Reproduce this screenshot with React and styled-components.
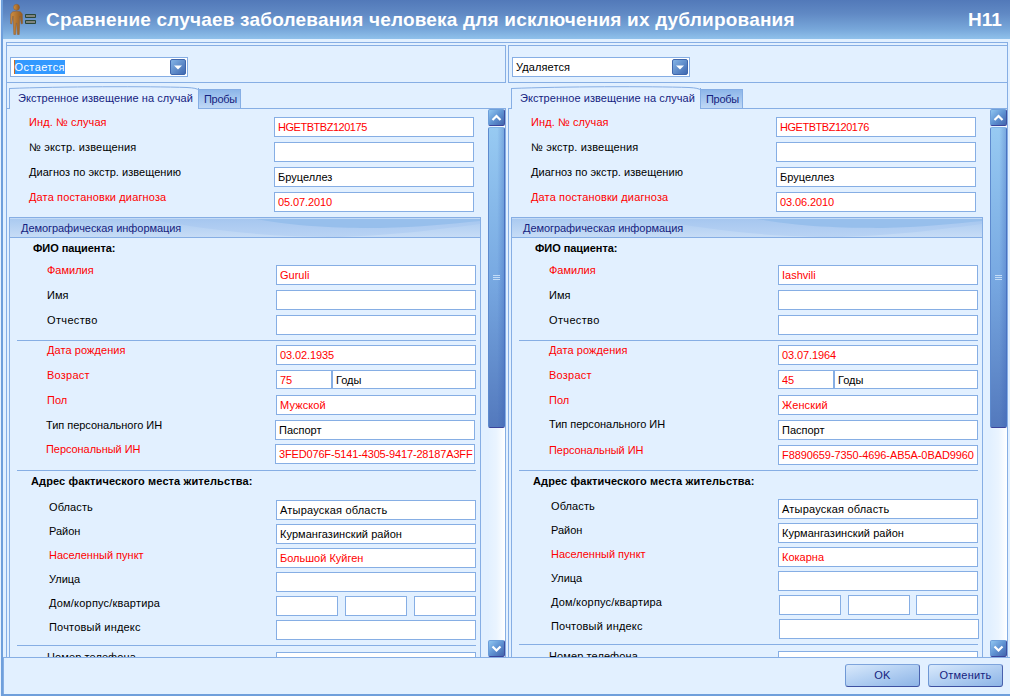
import React from "react";
import styled, { createGlobalStyle, css } from "styled-components";

const line = "#86aee4";
const face = "#e2f0ff";
const navy = "#15237f";

const Global = createGlobalStyle`
  * { box-sizing: border-box; }
  html, body { margin: 0; height: 696px; overflow: hidden; }
  body { font: 11px/12px "Liberation Sans", Arial, sans-serif; color: #000; background: #e8f2fe; }
`;

const Window = styled.div`
  width: 1009px; height: 696px; margin-left: 1px;
  display: flex; flex-direction: column;
  background: ${face};
  border-left: 2px solid #6f9fdb;
  border-bottom: 2px solid #6f9fdb;
  overflow: hidden;
`;
const Header = styled.header`
  flex: none; height: 39px; padding: 0 8px 0 7px;
  display: flex; align-items: center;
  background: linear-gradient(#5279b9, #6089c4 35%, #78a7da 75%, #90c1eb);
  color: #fff; font-weight: bold; font-size: 19px; line-height: 39px; white-space: nowrap;
`;
const Title = styled.h1`
  margin: 0 auto 0 5px; font: inherit; letter-spacing: 0.19px;
`;
const Code = styled.span`letter-spacing: 0.1px;`;

const Frame = styled.main`
  flex: none; height: 616px; width: 1002px; margin: 3px 0 0 3px;
  border: 1px solid ${line};
  display: flex; gap: 2px; padding-top: 2px;
`;
const Column = styled.section`
  width: 500px; flex: none; display: flex; flex-direction: column;
  margin-left: ${(p) => (p.$first ? -1 : 0)}px;
`;
const ComboBar = styled.div`
  flex: none; height: 38px; border: 1px solid ${line}; padding: 11px 0 0 3px;
`;
const Combo = styled.div`
  width: 178px; height: 20px; border: 1px solid ${line}; background: #fff;
  display: flex; justify-content: space-between; align-items: center; padding: 0 1px 0 3px;
`;
const ComboText = styled.span`
  line-height: 14px; letter-spacing: 0.1px;
  ${(p) => p.$selected && css`background: #3399ff; color: #fff; border-left: 1px solid #d06a1c; letter-spacing: 0.4px; text-indent: -0.5px;`}
`;
const ComboButton = styled.span`
  width: 16px; height: 16px; border-radius: 2px; border: 1px solid #3f66ac;
  background: linear-gradient(135deg, #84b4e6, #3f68b0);
  display: flex; align-items: center; justify-content: center;
`;
const Tabs = styled.nav`
  flex: none; height: 26px; display: flex; align-items: flex-end; color: ${navy};
`;
const TabGap = styled.div`
  height: 1px; background: ${line};
  width: ${(p) => (p.$grow ? "auto" : "3px")}; flex: ${(p) => (p.$grow ? 1 : "none")};
`;
const Tab = styled.div`
  white-space: nowrap; border: 1px solid ${line};
  ${(p) => p.$active
    ? css`width: 190px; height: 21px; border-bottom: 0; border-top: 0; padding: 4px 0 0 8px; position: relative; letter-spacing: 0.06px;`
    : css`width: 43px; height: 20px; margin-left: -1px; padding: 3px 0 0 5px; letter-spacing: -0.3px;
        background: linear-gradient(#8db6e9, #c0d9f6);`}
`;
const TabCurve = styled.svg`
  position: absolute; left: -1px; top: -2px; width: 190px; height: 4px; overflow: visible;
`;
const Page = styled.div`
  flex: 1; min-height: 0; display: flex; overflow: hidden;
  border: solid ${line}; border-width: 0 1px;
`;
const Form = styled.div`flex: 1; min-width: 0; overflow: hidden; padding-top: 7px;`;

const Row = styled.div`
  display: flex; align-items: flex-start; height: ${(p) => p.$h}px; white-space: nowrap;
`;
const Label = styled.label`
  flex: none; width: ${(p) => p.$w}px; padding-left: ${(p) => p.$x}px;
  margin-top: ${(p) => p.$dy}px; color: ${(p) => (p.$red ? "#f00" : "#000")};
  letter-spacing: ${(p) => p.$ls || 0}px;
`;
const Field = styled.div`
  flex: none; width: ${(p) => p.$w || 200}px; height: ${(p) => p.$h || 20}px;
  margin: ${(p) => p.$dy}px 0 0 ${(p) => p.$ml || 0}px; padding: 3px 0 0 3px;
  border: 1px solid ${line}; background: #fff; overflow: hidden;
  color: ${(p) => (p.$red ? "#f00" : "#000")};
  letter-spacing: ${(p) => p.$ls || 0}px;
`;
const Group = styled.div`
  margin: 1px 0 0 2px; width: 472px; height: 460px;
  border: 1px solid ${line}; border-bottom: 0;
`;
const GroupHeader = styled.div`
  height: 20px; border-bottom: 1px solid ${line}; position: relative;
  background: #c3dbf6; color: ${navy}; padding: 4px 0 0 11px;
`;
const Wave = styled.svg`position: absolute; left: 0; top: 0; width: 470px; height: 19px;`;
const GroupTitle = styled.span`position: relative; letter-spacing: -0.06px;`;
const Heading = styled.div`
  font-weight: bold; height: ${(p) => p.$h}px; padding: ${(p) => p.$top}px 0 0 ${(p) => p.$x}px;
  letter-spacing: ${(p) => p.$ls || 0}px;
`;
const Rule = styled.div`
  height: 1px; background: ${line}; margin: 0 4px ${(p) => p.$below}px 7px;
`;

const Scroll = styled.div`
  flex: none; width: 17px; display: flex; flex-direction: column;
  background: linear-gradient(90deg, ${face}, #eaf4ff 50%, #fff);
`;
const ScrollButton = styled.div`
  height: 17px; flex: none; border-radius: 2px; border: 1px solid;
  border-color: #6fa0da #3f4f9f #3b449b #6c9dd9;
  background: linear-gradient(135deg, #8fc5f0, #5f92d2 50%, #4264ac);
  display: flex; align-items: center; justify-content: center;
`;
const Thumb = styled.div`
  height: 301px; flex: none; margin: 1px 0 auto; border-radius: 2px;
  border: 1px solid; border-color: #7fb3e6 #4a72c0 #3b449b #5d8ace;
  background: linear-gradient(90deg, transparent 55%, rgba(50,90,180,.3)), linear-gradient(#97caf2, #78a9e2 50%, #5379bd);
  display: flex; align-items: center; justify-content: center;
`;
const Footer = styled.footer`
  flex: 1; display: flex; justify-content: flex-end; gap: 8px; padding: 6px 7px 0 0; margin-top: -1px;
  border-top: 1px solid ${line}; border-left: 1px solid ${line};
`;
const Button = styled.button`
  width: 75px; height: 23px; padding: 0 0 1px; border-radius: 3px; border: 1px solid;
  border-color: #7ea4dc #4a62ae #3d51a2 #6f99d6;
  background: linear-gradient(165deg, #d9e9fb, #b5d1f3 45%, #8db4e6);
  font: inherit; color: ${navy}; letter-spacing: 0.2px;
`;

const Person = () => (
  <svg width="31" height="34" viewBox="0 0 31 34">
    <defs>
      <linearGradient id="skin" x1="0" x2="1">
        <stop offset="0" stopColor="#d08f42" /><stop offset="1" stopColor="#92591f" />
      </linearGradient>
    </defs>
    <g fill="url(#skin)" stroke="#8a5a30" strokeWidth=".5">
      <circle cx="6.500" cy="4.300" r="3" />
      <path d="M2.500 8.800Q6.500 7.600 10.500 8.800L12.300 11L12.600 20.500L11.300 21L10 13L9.700 18L9.200 31.500H7.400L6.700 20H6.300L5.600 31.500H3.800L3.300 18L3 13L1.700 21L.4 20.500L.7 11z" />
    </g>
    <path d="M15.500 11.500h10v3h-10zM15.500 17.500h10v3h-10z" fill="#80847e" stroke="#2b4637" />
  </svg>
);
const Chevron = ({ down }) => (
  <svg width="11" height="8" viewBox="0 0 11 8">
    <path d={down ? "M1.500 1.500L5.500 5.500L9.500 1.500" : "M1.500 6L5.500 2L9.500 6"} fill="none" stroke="#fff" strokeWidth="2.200" />
  </svg>
);

function Entry({ label, value = "", red, x = 38, w = 267, h = 25, ly = 0, fy = 1, ls, vls, fh, children }) {
  return (
    <Row $h={h}>
      <Label $x={x} $w={w} $dy={ly} $red={red} $ls={ls}>{label}</Label>
      {children || <Field $dy={fy} $red={red} $ls={vls} $h={fh}>{value}</Field>}
    </Row>
  );
}

function CaseColumn({ first, d }) {
  return (
    <Column $first={first}>
      <ComboBar>
        <Combo>
          <ComboText $selected={first}>{d.action}</ComboText>
          <ComboButton>
            <svg width="8" height="5"><path d="M0 0.500h8L4 4.500z" fill="#fff" /></svg>
          </ComboButton>
        </Combo>
      </ComboBar>
      <Tabs>
        <TabGap />
        <Tab $active>
          <TabCurve viewBox="0 0 190 4">
            <path d="M0.500 4V2.500C50 .5 140 .2 178 1.500Q188 2 189.500 4" fill="none" stroke={line} />
          </TabCurve>
          Экстренное извещение на случай
        </Tab>
        <Tab>Пробы</Tab>
        <TabGap $grow />
      </Tabs>
      <Page>
        <Form>
          <Entry label="Инд. № случая" value={d.id} red x={22} ls={0.08} vls={-0.47} />
          <Entry label="№ экстр. извещения" x={22} ls={0.17} />
          <Entry label="Диагноз по экстр. извещению" value="Бруцеллез" x={22} ls={0.04} />
          <Entry label="Дата постановки диагноза" value={d.diagDate} red x={22} ls={0.14} vls={-0.1} />
          <Group>
            <GroupHeader>
              <Wave viewBox="0 0 470 19" preserveAspectRatio="none">
                <defs>
                  <linearGradient id="base" x1="0" x2="0" y1="0" y2="1">
                    <stop offset="0" stopColor="#a9c9f0" /><stop offset="1" stopColor="#c6dcf6" />
                  </linearGradient>
                  <linearGradient id="band" x1="0" x2="0" y1="0" y2="1">
                    <stop offset="0" stopColor="#a5c6ef" /><stop offset="1" stopColor="#b9d3f4" />
                  </linearGradient>
                </defs>
                <path d="M0 0H470V19H0z" fill="url(#base)" />
                <path d="M130 0C200 12 250 19 330 19C390 17 430 11 470 6V0z" fill="url(#band)" />
                <path d="M240 0C290 10 340 10 370 10C410 9 440 6 470 3V0z" fill="#97bfec" />
                <path d="M0 .5H470" stroke="#c3daf6" />
              </Wave>
              <GroupTitle>Демографическая информация</GroupTitle>
            </GroupHeader>
            <Heading $h={26} $top={4} $x={23} $ls={-0.05}>ФИО пациента:</Heading>
            <Entry label="Фамилия" value={d.surname} red x={37} w={266} />
            <Entry label="Имя" x={37} w={266} />
            <Entry label="Отчество" x={37} w={266} h={26} ls={0.35} />
            <Rule $below={3} />
            <Entry label="Дата рождения" value={d.birth} red x={37} w={266} ls={0.08} vls={-0.1} />
            <Entry label="Возраст" red x={37} w={266} ls={0.25}>
              <Field $dy={1} $h={19} $w={56} $red>{d.age}</Field>
              <Field $dy={1} $h={19} $w={144}>Годы</Field>
            </Entry>
            <Entry label="Пол" value={d.sex} red x={37} w={266} vls={0.12} />
            <Entry
              label="Тип персонального ИН" value="Паспорт" x={first ? 36 : 37} w={first ? 265 : 266}
              ly={first ? 0 : -1} h={first ? 24 : 25} ls={-0.03}
            />
            <Entry
              label="Персональный ИН" value={d.pin} red x={first ? 36 : 37} w={first ? 265 : 266}
              h={first ? 27 : 26} ls={-0.06} vls={first ? -0.16 : -0.08}
            />
            <Rule $below={4} />
            <Heading $h={first ? 25 : 24} $top={0} $x={21} $ls={0.11}>Адрес фактического места жительства:</Heading>
            <Entry label="Область" value="Атырауская область" x={39} w={266} h={24} ly={1} fy={0} ls={0.1} vls={0.2} />
            <Entry label="Район" value="Курмангазинский район" x={39} w={266} h={24} ly={1} fy={0} vls={0.05} />
            <Entry label="Населенный пункт" value={d.town} red x={39} w={266} h={24} ly={1} fy={0} />
            <Entry label="Улица" x={39} w={266} h={24} ly={1} fy={0} />
            <Entry label="Дом/корпус/квартира" x={39} w={first ? 266 : 267} h={24} ly={1} ls={0.2}>
              <Field $w={62} $dy={0} />
              <Field $w={62} $dy={0} $ml={7} />
              <Field $w={62} $dy={0} $ml={first ? 7 : 6} />
            </Entry>
            <Entry label="Почтовый индекс" x={39} w={first ? 266 : 267} h={25} ly={1} fy={0} ls={0.2} />
            <Rule $below={5} />
            <Entry label="Номер телефона" x={37} w={266} ls={0.1} />
          </Group>
        </Form>
        <Scroll>
          <ScrollButton><Chevron /></ScrollButton>
          <Thumb>
            <svg width="7" height="6"><path d="M0 .5h7M0 2.500h7M0 4.500h7" stroke="#c3dcf7" /></svg>
          </Thumb>
          <ScrollButton><Chevron down /></ScrollButton>
        </Scroll>
      </Page>
    </Column>
  );
}

const kept = {
  action: "Остается", id: "HGETBTBZ120175", diagDate: "05.07.2010", surname: "Guruli",
  birth: "03.02.1935", age: "75", sex: "Мужской", pin: "3FED076F-5141-4305-9417-28187A3FF", town: "Большой Куйген",
};
const removed = {
  action: "Удаляется", id: "HGETBTBZ120176", diagDate: "03.06.2010", surname: "Iashvili",
  birth: "03.07.1964", age: "45", sex: "Женский", pin: "F8890659-7350-4696-AB5A-0BAD9960", town: "Кокарна",
};

export default function App() {
  return (
    <>
      <Global />
      <Window>
        <Header>
          <Person />
          <Title>Сравнение случаев заболевания человека для исключения их дублирования</Title>
          <Code>H11</Code>
        </Header>
        <Frame>
          <CaseColumn first d={kept} />
          <CaseColumn d={removed} />
        </Frame>
        <Footer>
          <Button>OK</Button>
          <Button>Отменить</Button>
        </Footer>
      </Window>
    </>
  );
}
